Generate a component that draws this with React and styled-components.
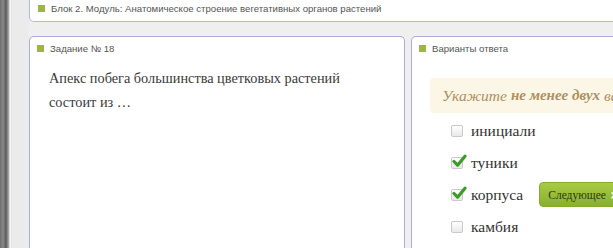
import React from "react";
import styled, { createGlobalStyle } from "styled-components";

// GLOBAL PAGE STYLES
const GlobalStyle = createGlobalStyle`
  html, body {
    margin: 0;
    padding: 0;
    width: 613px;
    height: 248px;
    overflow: hidden;
    background: #efefef;
  }
`;

const options = [
  { label: "инициали", checked: false },
  { label: "туники", checked: true },
  { label: "корпуса", checked: true },
  { label: "камбия", checked: false },
];

// CHECKMARK ICON
const Tick = () => (
  <svg width="15" height="14" viewBox="0 0 15 14">
    <path
      d="M2 7.5 L5.6 11.2 L13 2.2"
      fill="none"
      stroke="#3c9a2c"
      strokeWidth="3.2"
      strokeLinecap="round"
      strokeLinejoin="round"
    />
  </svg>
);

const App = () => {
  return (
    <>
      <GlobalStyle />
      <Page>
        <WindowEdge />
        <Gutter />
        <Content>
          <TopBar>
            <Marker />
            <SmallTitle>
              Блок 2. Модуль: Анатомическое строение вегетативных органов растений
            </SmallTitle>
          </TopBar>
          <Columns>
            <Panel $width="374px">
              <PanelHead>
                <Marker />
                <SmallTitle>Задание № 18</SmallTitle>
              </PanelHead>
              <Question>
                Апекс побега большинства цветковых растений
                <br />
                состоит из …
              </Question>
            </Panel>
            <Panel $width="240px">
              <PanelHead>
                <Marker />
                <SmallTitle>Варианты ответа</SmallTitle>
              </PanelHead>
              <Hint>
                Укажите <b>не менее двух</b> вариантов ответа
              </Hint>
              <OptionList>
                {options.map((opt) => (
                  <Option key={opt.label}>
                    <Box>{opt.checked && <Tick />}</Box>
                    <span>{opt.label}</span>
                    {opt.label === "корпуса" && (
                      <NextButton>
                        Следующее <Chevron>›</Chevron>
                      </NextButton>
                    )}
                  </Option>
                ))}
              </OptionList>
            </Panel>
          </Columns>
        </Content>
      </Page>
    </>
  );
};

const Page = styled.div`
  display: flex;
  width: 613px;
  height: 248px;
  overflow: hidden;
`;

const WindowEdge = styled.div`
  flex: 0 0 12px;
  background: linear-gradient(
    to right,
    #6d6d6d 0px,
    #8a8a8a 3px,
    #5a5a5a 6px,
    #b5b5b5 9px,
    #ffffff 10px,
    #dcdcdc 12px
  );
`;

const Gutter = styled.div`
  flex: 0 0 17px;
  background: #ebebeb;
`;

const Content = styled.div`
  flex: 1;
  display: flex;
  flex-direction: column;
  gap: 14px;
  min-width: 0;
`;

const TopBar = styled.div`
  height: 17px;
  display: flex;
  align-items: center;
  gap: 6px;
  padding: 0 0 4px 8px;
  margin-right: -20px;
  background: #ffffff;
  border: 1px solid #b9b7d6;
  border-top: none;
  border-radius: 0 0 5px 5px;
`;

const Marker = styled.span`
  width: 7px;
  height: 7px;
  background: #9ab83a;
  flex-shrink: 0;
`;

const SmallTitle = styled.span`
  font-family: "Liberation Sans", Arial, sans-serif;
  font-size: 9.6px;
  color: #555555;
  white-space: nowrap;
`;

const Columns = styled.div`
  flex: 1;
  display: flex;
  gap: 6px;
`;

const Panel = styled.div`
  flex: 0 0 ${(p) => p.$width};
  background: #ffffff;
  border: 1px solid #aeacd3;
  border-bottom: none;
  border-radius: 5px 5px 0 0;
  overflow: hidden;
`;

const PanelHead = styled.div`
  display: flex;
  align-items: center;
  gap: 6px;
  height: 20px;
  padding: 1px 0 0 7px;
`;

const Question = styled.p`
  margin: 8px 0 0 19px;
  font-family: "Liberation Serif", "Times New Roman", serif;
  font-size: 14.3px;
  line-height: 24px;
  color: #3a3a3a;
`;

const Hint = styled.div`
  margin: 20px 0 0 18px;
  height: 35px;
  display: flex;
  align-items: center;
  gap: 4px;
  padding-left: 12px;
  background: #fcf6e6;
  border-radius: 4px 0 0 4px;
  font-family: "Liberation Serif", "Times New Roman", serif;
  font-style: italic;
  font-size: 15.5px;
  color: #ad8f60;
  white-space: nowrap;

  b {
    font-size: 15px;
  }
`;

const OptionList = styled.div`
  display: flex;
  flex-direction: column;
  gap: 13px;
  padding: 8px 0 0 39px;
`;

const Option = styled.label`
  display: flex;
  align-items: center;
  gap: 8px;
  height: 19px;
  font-family: "Liberation Serif", "Times New Roman", serif;
  font-size: 15.5px;
  color: #333333;
  white-space: nowrap;
`;

const Box = styled.span`
  position: relative;
  width: 10px;
  height: 10px;
  border: 1px solid #c9c9c9;
  border-radius: 2px;
  background: linear-gradient(#ffffff, #e9e9e9);
  flex-shrink: 0;

  svg {
    position: absolute;
    left: 0px;
    top: -4px;
  }
`;

const NextButton = styled.span`
  margin-left: 8px;
  height: 23px;
  display: flex;
  align-items: center;
  gap: 4px;
  padding: 0 6px 0 8px;
  background: linear-gradient(#a8cb44, #88b02d);
  border: 1px solid #86a92e;
  border-radius: 4px;
  font-size: 11.5px;
  color: #2f3a15;
`;

const Chevron = styled.span`
  font-family: "DejaVu Sans", sans-serif;
  font-weight: bold;
  font-size: 16px;
  line-height: 1;
  color: #ffffff;
`;

export default App;
